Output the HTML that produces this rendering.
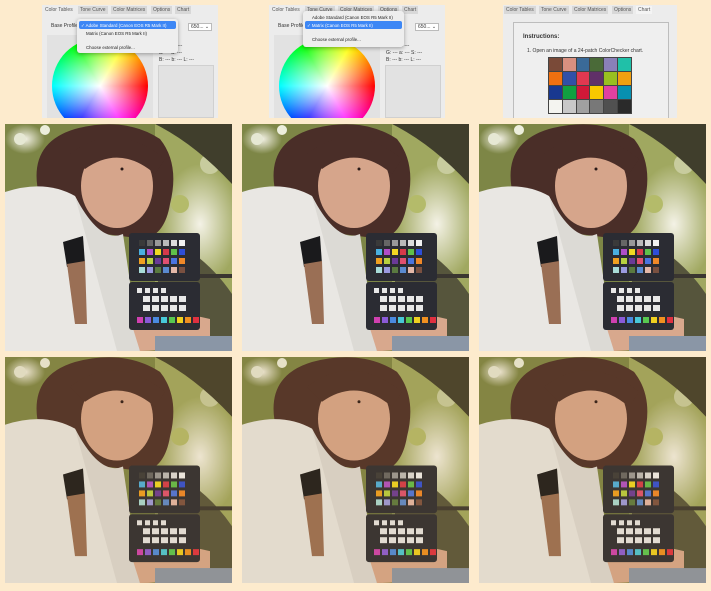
<!DOCTYPE html>
<html><head><meta charset="utf-8"><style>
*{margin:0;padding:0;box-sizing:border-box}
body{width:711px;height:591px;background:#fdebcd;position:relative;overflow:hidden;font-family:"Liberation Sans",sans-serif}
.p{position:absolute;overflow:hidden;background:#ececec}
.tabs{position:absolute;left:0;top:0;right:0;height:9px;background:#ececec;font-size:5px;color:#555}
.tabs span{position:absolute;top:1px;height:8px;background:#d8d8d8;padding:1px 2px;white-space:nowrap}
.t{position:absolute;font-size:5px;color:#333;white-space:nowrap}
.wheel{position:absolute;width:96px;height:96px;border-radius:50%;background:conic-gradient(from 90deg,#f00,#f0f,#00f,#0ff,#0f0,#ff0,#f00)}
.wheel:after{content:"";position:absolute;inset:0;border-radius:50%;background:radial-gradient(circle,#fff 0,rgba(255,255,255,.5) 35%,rgba(255,255,255,0) 70%)}
.menu{position:absolute;background:#eeeeee;border-radius:3px;box-shadow:0 1px 4px rgba(0,0,0,.35);font-size:4.4px;color:#222}
.menu div{position:absolute;left:2px;right:2px;height:8px;padding:1.5px 2px;white-space:nowrap;overflow:hidden}
.sel{background:#3d87f5;color:#fff;border-radius:2px}
.ph{position:absolute;width:227px;height:227px}
</style></head><body>
<svg width="0" height="0" style="position:absolute">
<defs>
<radialGradient id="sky" cx=".5" cy=".5" r=".5"><stop offset="0" stop-color="#f4f2e6"/><stop offset="1" stop-color="#f4f2e6" stop-opacity="0"/></radialGradient>
<symbol id="photo" viewBox="0 0 227 227">
<rect width="227" height="227" fill="#7d8646"/>
<rect x="150" y="0" width="77" height="170" fill="#a0a860"/>
<ellipse cx="195" cy="100" rx="40" ry="60" fill="url(#sky)"/>
<ellipse cx="20" cy="15" rx="20" ry="15" fill="url(#sky)"/>
<circle cx="15" cy="15" r="6" fill="#e6e8d4"/><circle cx="40" cy="6" r="5" fill="#eceedc"/>
<circle cx="205" cy="40" r="10" fill="#c8cc9e"/><circle cx="175" cy="80" r="9" fill="#b4bb6a"/>
<path d="M150 0 Q190 20 227 60 L227 0Z" fill="#403e2c"/>
<path d="M155 110 Q200 130 227 170 L227 227 L150 227Z" fill="#56553c"/>
<rect x="195" y="150" width="32" height="4" fill="#3a3630"/>
<path d="M35 75 Q20 20 70 5 Q120 -8 155 15 Q175 40 165 80 Q160 110 140 115 L100 110Z" fill="#4a2e28"/>
<ellipse cx="112" cy="62" rx="36" ry="42" fill="#d6a58b"/>
<path d="M65 30 Q110 -5 160 35 L150 50 Q115 20 80 45Z" fill="#4a2e28"/>
<circle cx="117" cy="45" r="1.5" fill="#2a1a18"/>
<path d="M0 68 Q40 55 70 72 L95 120 L125 227 L0 227Z" fill="#e9e7e3"/>
<path d="M70 72 Q95 120 118 110 L135 227 L112 227Z" fill="#dcdad5"/>
<path d="M58 118 L78 112 L80 140 L62 143Z" fill="#1a1a1c"/>
<path d="M62 140 L80 137 L82 200 L70 200Z" fill="#9a6f55"/>
<path d="M125 195 Q165 185 205 195 L205 212 Q170 227 135 227Z" fill="#d8a88d"/>
<rect x="150" y="212" width="77" height="15" fill="#8a96a6"/>
<rect x="124" y="109" width="71" height="48" rx="3" fill="#2b2c33"/>
<rect x="124" y="158" width="71" height="48" rx="3" fill="#2b2c33"/>
<g>
<rect x="134" y="116" width="6" height="6" fill="#3a3a3a"/><rect x="142" y="116" width="6" height="6" fill="#666"/><rect x="150" y="116" width="6" height="6" fill="#999"/><rect x="158" y="116" width="6" height="6" fill="#bbb"/><rect x="166" y="116" width="6" height="6" fill="#ddd"/><rect x="174" y="116" width="6" height="6" fill="#f2f2f2"/>
<rect x="134" y="125" width="6" height="6" fill="#4ab0e0"/><rect x="142" y="125" width="6" height="6" fill="#b04ec8"/><rect x="150" y="125" width="6" height="6" fill="#f0d822"/><rect x="158" y="125" width="6" height="6" fill="#d63a4a"/><rect x="166" y="125" width="6" height="6" fill="#5fc04a"/><rect x="174" y="125" width="6" height="6" fill="#2e4ed8"/>
<rect x="134" y="134" width="6" height="6" fill="#f0a020"/><rect x="142" y="134" width="6" height="6" fill="#b8d040"/><rect x="150" y="134" width="6" height="6" fill="#6a3a98"/><rect x="158" y="134" width="6" height="6" fill="#e05070"/><rect x="166" y="134" width="6" height="6" fill="#4a74e0"/><rect x="174" y="134" width="6" height="6" fill="#f08828"/>
<rect x="134" y="143" width="6" height="6" fill="#a8dcd8"/><rect x="142" y="143" width="6" height="6" fill="#9a9ae0"/><rect x="150" y="143" width="6" height="6" fill="#5a7a40"/><rect x="158" y="143" width="6" height="6" fill="#5a8ad0"/><rect x="166" y="143" width="6" height="6" fill="#e4b8a8"/><rect x="174" y="143" width="6" height="6" fill="#7a5040"/>
</g>
<g fill="#e8e8e8">
<rect x="132" y="164" width="5" height="5"/><rect x="140" y="164" width="5" height="5"/><rect x="148" y="164" width="5" height="5"/><rect x="156" y="164" width="5" height="5"/>
<rect x="138" y="172" width="7" height="6"/><rect x="147" y="172" width="7" height="6"/><rect x="156" y="172" width="7" height="6"/><rect x="165" y="172" width="7" height="6"/><rect x="174" y="172" width="7" height="6"/>
<rect x="138" y="181" width="7" height="6"/><rect x="147" y="181" width="7" height="6"/><rect x="156" y="181" width="7" height="6"/><rect x="165" y="181" width="7" height="6"/><rect x="174" y="181" width="7" height="6"/>
</g>
<rect x="132" y="193" width="6" height="6" fill="#d040b0"/><rect x="140" y="193" width="6" height="6" fill="#8a5ad8"/><rect x="148" y="193" width="6" height="6" fill="#4a8ae0"/><rect x="156" y="193" width="6" height="6" fill="#48c8d8"/><rect x="164" y="193" width="6" height="6" fill="#58c850"/><rect x="172" y="193" width="6" height="6" fill="#f0d020"/><rect x="180" y="193" width="6" height="6" fill="#f09020"/><rect x="188" y="193" width="6" height="6" fill="#e03040"/>
</symbol>
</defs></svg>

<!-- Panel 1 -->
<div class="p" style="left:42px;top:5px;width:176px;height:113px">
<div class="tabs"><span style="left:1px;background:#ececec">Color Tables</span><span style="left:36px">Tone Curve</span><span style="left:69px">Color Matrices</span><span style="left:109px">Options</span><span style="left:133px">Chart</span></div>
<div class="t" style="left:9px;top:18px">Base Profile</div>
<div style="position:absolute;left:5px;top:30px;width:106px;height:83px;background:#e2e2e2"></div>
<div class="wheel" style="left:10px;top:33px"></div>
<div class="t" style="left:146px;top:18px;background:#fff;border:1px solid #bbb;padding:0 2px">650... ⌄</div>
<div class="t" style="left:117px;top:38px;line-height:7px">L: --- H: ---<br>a: --- S: ---<br>B: --- b: --- L: ---</div>
<div style="position:absolute;left:116px;top:60px;width:56px;height:53px;background:#e2e2e2;border:1px solid #d0d0d0"></div>
<div class="menu" style="left:35px;top:14px;width:101px;height:34px">
<div class="sel" style="top:2px">✓ Adobe Standard (Canon EOS R5 Mark II)</div>
<div style="top:10px;left:7px">Matrix (Canon EOS R5 Mark II)</div>
<div style="top:24px;left:7px">Choose external profile...</div>
</div>
</div>

<!-- Panel 2 -->
<div class="p" style="left:269px;top:5px;width:176px;height:113px">
<div class="tabs"><span style="left:1px;background:#ececec">Color Tables</span><span style="left:36px">Tone Curve</span><span style="left:69px">Color Matrices</span><span style="left:109px">Options</span><span style="left:133px">Chart</span></div>
<div class="t" style="left:9px;top:18px">Base Profile</div>
<div style="position:absolute;left:5px;top:30px;width:106px;height:83px;background:#e2e2e2"></div>
<div class="wheel" style="left:10px;top:33px"></div>
<div class="t" style="left:146px;top:18px;background:#fff;border:1px solid #bbb;padding:0 2px">650... ⌄</div>
<div class="t" style="left:117px;top:38px;line-height:7px">L: --- H: ---<br>G: --- a: --- S: ---<br>B: --- b: --- L: ---</div>
<div style="position:absolute;left:116px;top:60px;width:56px;height:53px;background:#e2e2e2;border:1px solid #d0d0d0"></div>
<div class="menu" style="left:34px;top:6px;width:101px;height:36px">
<div style="top:2px;left:7px">Adobe Standard (Canon EOS R5 Mark II)</div>
<div class="sel" style="top:10px">✓ Matrix (Canon EOS R5 Mark II)</div>
<div style="top:24px;left:7px">Choose external profile...</div>
</div>
</div>

<!-- Panel 3 -->
<div class="p" style="left:503px;top:5px;width:174px;height:113px">
<div class="tabs"><span style="left:1px">Color Tables</span><span style="left:36px">Tone Curve</span><span style="left:69px">Color Matrices</span><span style="left:109px">Options</span><span style="left:133px;background:#f4f4f4">Chart</span></div>
<div style="position:absolute;left:10px;top:17px;width:156px;height:100px;border:1px solid #bdbdbd;background:#efefef"></div>
<div class="t" style="left:20px;top:29px;font-weight:bold;font-size:6px">Instructions:</div>
<div class="t" style="left:24px;top:43px">1. Open an image of a 24-patch ColorChecker chart.</div>
<div style="position:absolute;left:45px;top:52px;width:84px;height:57px;background:#444;display:grid;grid-template-columns:repeat(6,1fr);gap:1px;padding:1px">
<i style="background:#7a4a38"></i><i style="background:#d89080"></i><i style="background:#3a6a98"></i><i style="background:#4a6a38"></i><i style="background:#8a80b8"></i><i style="background:#20c0a8"></i>
<i style="background:#f07010"></i><i style="background:#3050a8"></i><i style="background:#e03850"></i><i style="background:#603068"></i><i style="background:#98c020"></i><i style="background:#f0a010"></i>
<i style="background:#183890"></i><i style="background:#10a040"></i><i style="background:#d01838"></i><i style="background:#f8c800"></i><i style="background:#e040a0"></i><i style="background:#0890b0"></i>
<i style="background:#f4f4f0"></i><i style="background:#c8c8c8"></i><i style="background:#a0a0a0"></i><i style="background:#787878"></i><i style="background:#505050"></i><i style="background:#2a2a2a"></i>
</div>
</div>

<svg class="ph" style="left:5px;top:124px" viewBox="0 0 227 227"><use href="#photo"/></svg>
<svg class="ph" style="left:242px;top:124px" viewBox="0 0 227 227"><use href="#photo"/></svg>
<svg class="ph" style="left:479px;top:124px" viewBox="0 0 227 227"><use href="#photo"/></svg>
<svg class="ph" style="left:5px;top:357px;height:226px" viewBox="0 0 227 227" preserveAspectRatio="none"><use href="#photo"/><rect width="227" height="227" fill="#c08030" opacity=".12"/></svg>
<svg class="ph" style="left:242px;top:357px;height:226px" viewBox="0 0 227 227" preserveAspectRatio="none"><use href="#photo"/><rect width="227" height="227" fill="#c08030" opacity=".12"/></svg>
<svg class="ph" style="left:479px;top:357px;height:226px" viewBox="0 0 227 227" preserveAspectRatio="none"><use href="#photo"/><rect width="227" height="227" fill="#c08030" opacity=".12"/></svg>
</body></html>
